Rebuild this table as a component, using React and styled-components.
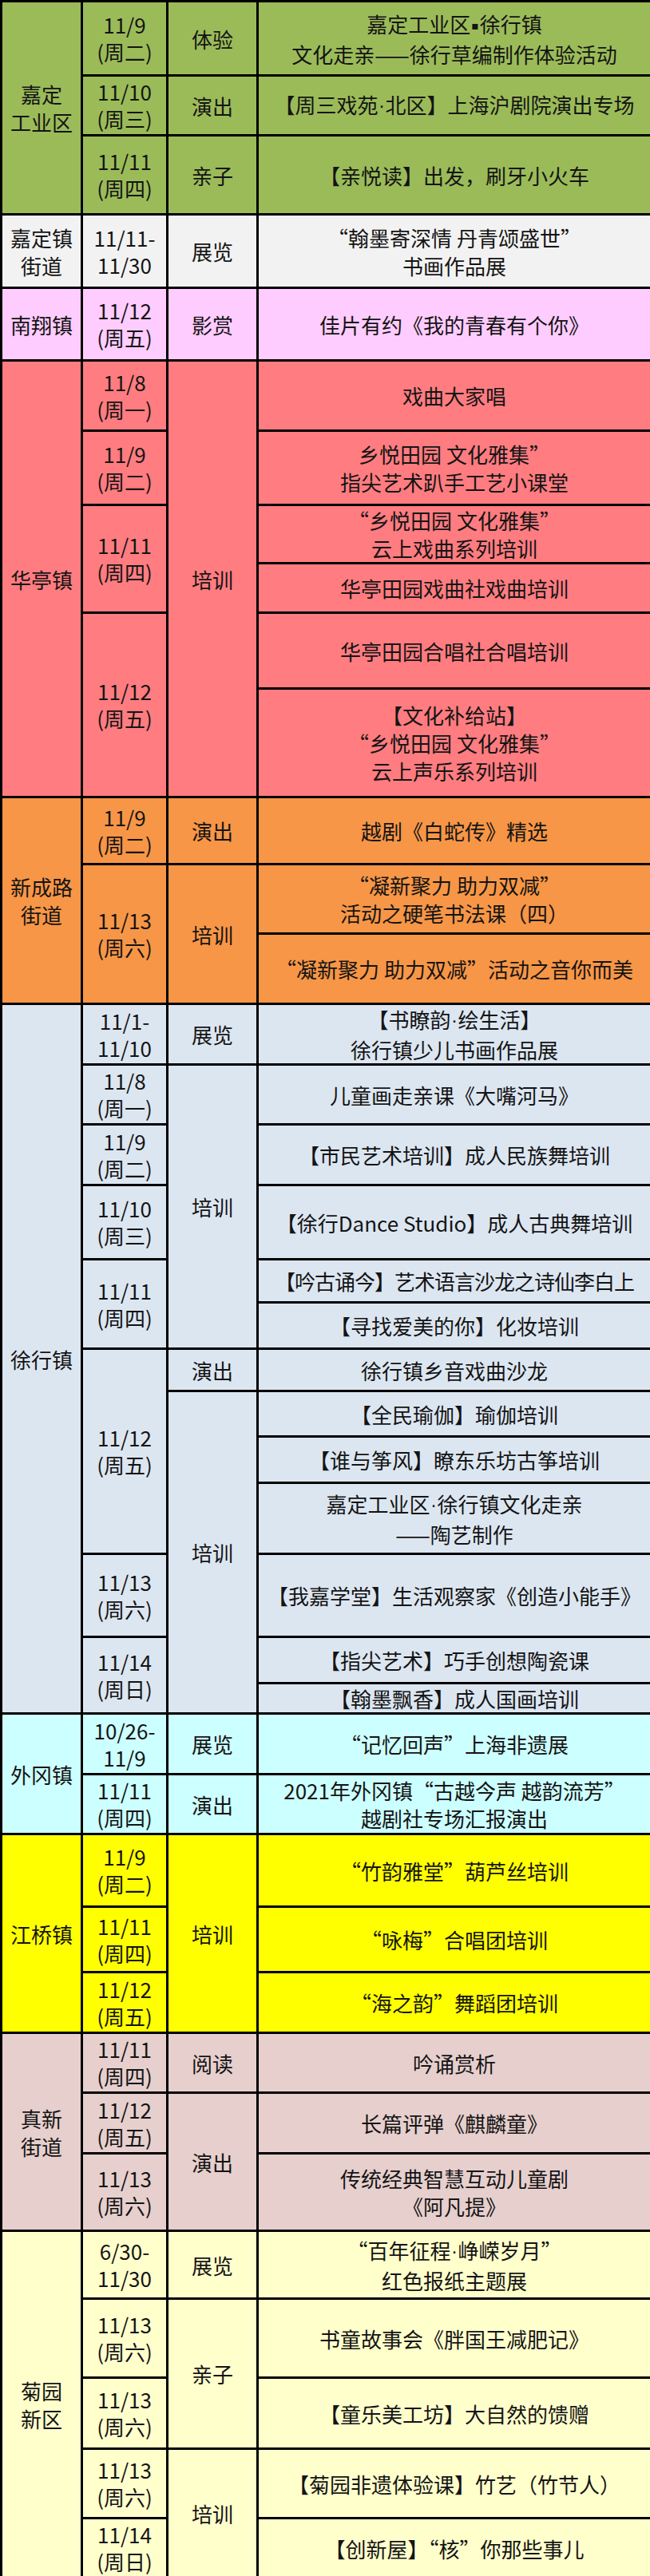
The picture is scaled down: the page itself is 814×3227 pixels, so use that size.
import styled, { createGlobalStyle } from 'styled-components';

const GlobalStyle = createGlobalStyle`
  html, body {
    margin: 0;
    padding: 0;
    background: #ffffff;
  }
  body {
    font-family: "Noto Sans CJK SC", "Noto Sans", sans-serif;
    color: #141414;
  }
`;

const Table = styled.table`
  width: 814px;
  border-collapse: collapse;
  table-layout: fixed;
`;

const Col = styled.col`
  width: ${(p) => p.$w}px;
`;

const Row = styled.tr`
  background: ${(p) => p.$bg};
  height: ${(p) => p.$h}px;
`;

const Cell = styled.td`
  border: 3px solid #000;
  padding: 0;
  text-align: center;
  vertical-align: middle;
  font-size: 26px;
  line-height: ${(p) => (p.$compact ? 30 : 35)}px;
  white-space: nowrap;
  letter-spacing: ${(p) => (p.$tight ? '-1px' : 'normal')};
`;

const DateCell = styled(Cell)`
  line-height: 34px;
`;

const Line = styled.span`
  display: block;
`;

// narrow separator dots, as in the original sheet
const Dot = styled.span`
  font-family: "DejaVu Sans", "Liberation Sans", sans-serif;
  font-size: ${(p) => (p.$square ? 14 : 22)}px;
  vertical-align: ${(p) => (p.$square ? '4px' : '1px')};
  margin: 0 1px;
`;

const withDots = (t) =>
  t.split(/([·▪])/).map((part, i) =>
    part === '·' || part === '▪' ? (
      <Dot key={i} $square={part === '▪'}>
        {part}
      </Dot>
    ) : (
      part
    )
  );

const Lines = ({ text }) =>
  (Array.isArray(text) ? text : [text]).map((t, i) => <Line key={i}>{withDots(t)}</Line>);

const wk = (d, w) => [d, `(周${w})`];

const groups = [
  {
    town: ['嘉定', '工业区'],
    bg: '#9BBB59',
    rows: [
      { h: 93, date: wk('11/9', '二'), type: '体验', act: ['嘉定工业区▪徐行镇', '文化走亲——徐行草编制作体验活动'] },
      { h: 75, date: wk('11/10', '三'), type: '演出', act: '【周三戏苑·北区】上海沪剧院演出专场' },
      { h: 99, date: wk('11/11', '四'), type: '亲子', act: '【亲悦读】出发，刷牙小火车' },
    ],
  },
  {
    town: ['嘉定镇', '街道'],
    bg: '#F2F2F2',
    rows: [
      { h: 92, date: ['11/11-', '11/30'], type: '展览', act: ['“翰墨寄深情 丹青颂盛世”', '书画作品展'] },
    ],
  },
  {
    town: '南翔镇',
    bg: '#FFCCFF',
    rows: [{ h: 91, date: wk('11/12', '五'), type: '影赏', act: '佳片有约《我的青春有个你》' }],
  },
  {
    town: '华亭镇',
    bg: '#FF7C80',
    rows: [
      { h: 88, date: wk('11/8', '一'), type: '培训', typeSpan: 6, act: '戏曲大家唱' },
      { h: 93, date: wk('11/9', '二'), act: ['乡悦田园 文化雅集”', '指尖艺术趴手工艺小课堂'] },
      { h: 70, date: wk('11/11', '四'), dateSpan: 2, act: ['“乡悦田园 文化雅集”', '云上戏曲系列培训'] },
      { h: 62, act: '华亭田园戏曲社戏曲培训' },
      { h: 95, date: wk('11/12', '五'), dateSpan: 2, act: '华亭田园合唱社合唱培训' },
      { h: 136, act: ['【文化补给站】', '“乡悦田园 文化雅集”', '云上声乐系列培训'] },
    ],
  },
  {
    town: ['新成路', '街道'],
    bg: '#F79646',
    rows: [
      { h: 84, date: wk('11/9', '二'), type: '演出', act: '越剧《白蛇传》精选' },
      { h: 87, date: wk('11/13', '六'), dateSpan: 2, type: '培训', typeSpan: 2, act: ['“凝新聚力 助力双减”', '活动之硬笔书法课（四）'] },
      { h: 88, act: '“凝新聚力 助力双减”活动之音你而美' },
    ],
  },
  {
    town: '徐行镇',
    bg: '#DCE6F1',
    rows: [
      { h: 76, date: ['11/1-', '11/10'], type: '展览', act: ['【书瞭韵·绘生活】', '徐行镇少儿书画作品展'] },
      { h: 75, date: wk('11/8', '一'), type: '培训', typeSpan: 5, act: '儿童画走亲课《大嘴河马》' },
      { h: 76, date: wk('11/9', '二'), act: '【市民艺术培训】成人民族舞培训' },
      { h: 93, date: wk('11/10', '三'), act: '【徐行Dance Studio】成人古典舞培训' },
      { h: 54, date: wk('11/11', '四'), dateSpan: 2, act: '【吟古诵今】艺术语言沙龙之诗仙李白上', tight: true },
      { h: 58, act: '【寻找爱美的你】化妆培训' },
      { h: 53, date: wk('11/12', '五'), dateSpan: 4, type: '演出', act: '徐行镇乡音戏曲沙龙' },
      { h: 57, type: '培训', typeSpan: 6, act: '【全民瑜伽】瑜伽培训' },
      { h: 58, act: '【谁与筝风】瞭东乐坊古筝培训' },
      { h: 89, act: ['嘉定工业区·徐行镇文化走亲', '——陶艺制作'] },
      { h: 104, date: wk('11/13', '六'), act: '【我嘉学堂】生活观察家《创造小能手》' },
      { h: 58, date: wk('11/14', '日'), dateSpan: 2, act: '【指尖艺术】巧手创想陶瓷课' },
      { h: 38, act: '【翰墨飘香】成人国画培训', compact: true },
    ],
  },
  {
    town: '外冈镇',
    bg: '#CCFFFF',
    rows: [
      { h: 76, date: ['10/26-', '11/9'], type: '展览', act: '“记忆回声”上海非遗展' },
      { h: 75, date: wk('11/11', '四'), type: '演出', act: ['2021年外冈镇“古越今声 越韵流芳”', '越剧社专场汇报演出'] },
    ],
  },
  {
    town: '江桥镇',
    bg: '#FFFF00',
    rows: [
      { h: 91, date: wk('11/9', '二'), type: '培训', typeSpan: 3, act: '“竹韵雅堂”葫芦丝培训' },
      { h: 82, date: wk('11/11', '四'), act: '“咏梅”合唱团培训' },
      { h: 76, date: wk('11/12', '五'), act: '“海之韵”舞蹈团培训' },
    ],
  },
  {
    town: ['真新', '街道'],
    bg: '#E6CFCD',
    rows: [
      { h: 75, date: wk('11/11', '四'), type: '阅读', act: '吟诵赏析' },
      { h: 76, date: wk('11/12', '五'), type: '演出', typeSpan: 2, act: '长篇评弹《麒麟童》' },
      { h: 97, date: wk('11/13', '六'), act: ['传统经典智慧互动儿童剧', '《阿凡提》'] },
    ],
  },
  {
    town: ['菊园', '新区'],
    bg: '#FFFFCC',
    rows: [
      { h: 85, date: ['6/30-', '11/30'], type: '展览', act: ['“百年征程·峥嵘岁月”', '红色报纸主题展'] },
      { h: 99, date: wk('11/13', '六'), type: '亲子', typeSpan: 2, act: '书童故事会《胖国王减肥记》' },
      { h: 89, date: wk('11/13', '六'), act: '【童乐美工坊】大自然的馈赠' },
      { h: 87, date: wk('11/13', '六'), type: '培训', typeSpan: 2, act: '【菊园非遗体验课】竹艺（竹节人）' },
      { h: 75, date: wk('11/14', '日'), act: '【创新屋】“核”你那些事儿' },
    ],
  },
];

export default function App() {
  return (
    <>
      <GlobalStyle />
      <Table>
        <colgroup>
          <Col $w={101} />
          <Col $w={107} />
          <Col $w={113} />
          <Col $w={493} />
        </colgroup>
        <tbody>
          {groups.map((g, gi) =>
            g.rows.map((r, ri) => (
              <Row key={`${gi}-${ri}`} $bg={g.bg} $h={r.h}>
                {ri === 0 && (
                  <Cell rowSpan={g.rows.length}>
                    <Lines text={g.town} />
                  </Cell>
                )}
                {r.date && (
                  <DateCell rowSpan={r.dateSpan || 1}>
                    <Lines text={r.date} />
                  </DateCell>
                )}
                {r.type && <Cell rowSpan={r.typeSpan || 1}>{r.type}</Cell>}
                <Cell $tight={r.tight} $compact={r.compact}>
                  <Lines text={r.act} />
                </Cell>
              </Row>
            ))
          )}
        </tbody>
      </Table>
    </>
  );
}
